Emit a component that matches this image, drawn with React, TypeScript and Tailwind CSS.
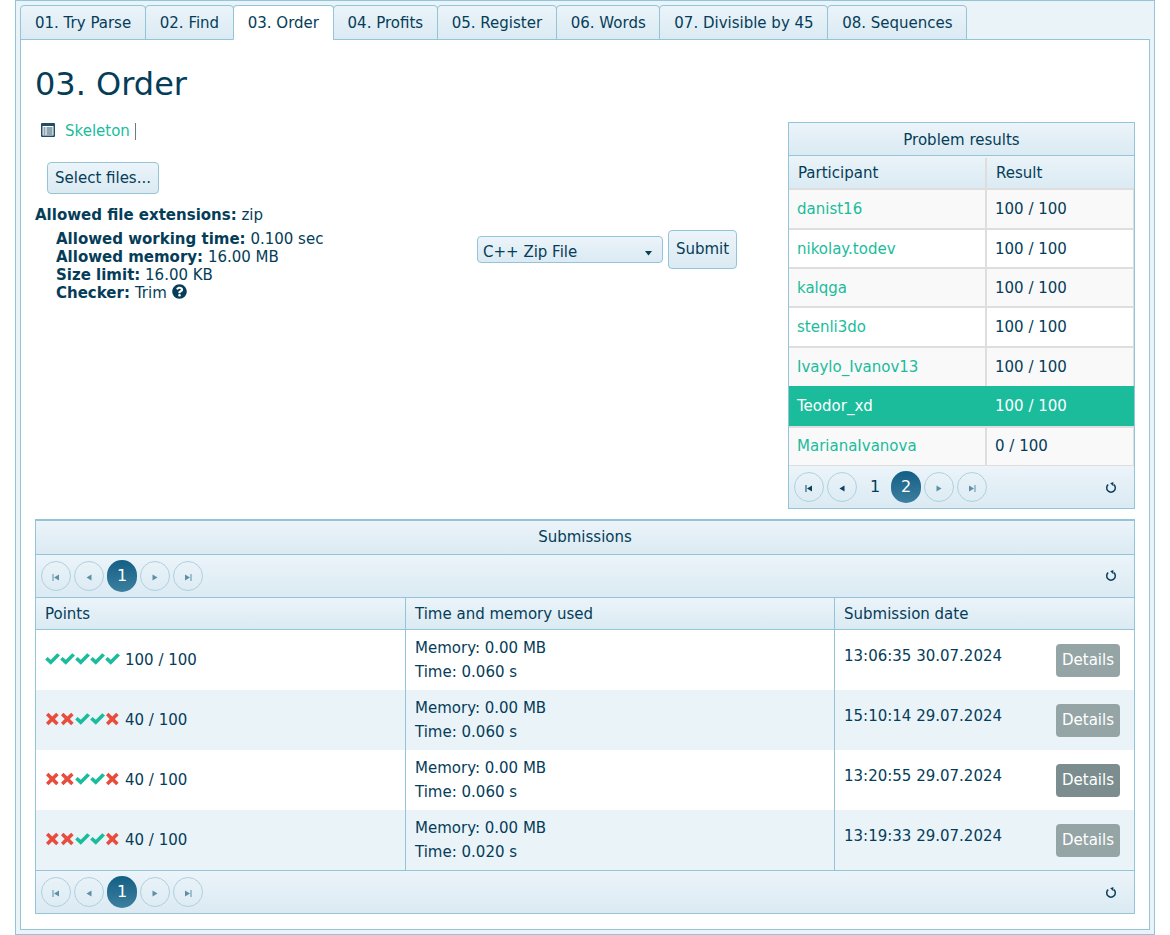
import React from "react";
import { FaQuestionCircle } from "react-icons/fa";

const tabs = ["01. Try Parse", "02. Find", "03. Order", "04. Profits", "05. Register", "06. Words", "07. Divisible by 45", "08. Sequences"];
const grad = "bg-gradient-to-b from-[#ebf4f9] to-[#dbeaf3]";

function Check() {
  return (
    <svg width="15" height="14" viewBox="0 0 15 14" className="shrink-0">
      <path d="M0.2 7.4 L2.6 5 L5.8 7.8 L12.2 1.2 L15 3.6 L5.8 12.8 Z" fill="#1abc9c" />
    </svg>
  );
}
function Cross() {
  return (
    <svg width="15" height="14" viewBox="0 0 15 14" className="shrink-0">
      <path d="M3.4 0.8 L7.3 4.4 L11.2 0.8 L13.6 3.2 L9.9 7 L13.6 10.8 L11.2 13.2 L7.3 9.6 L3.4 13.2 L1 10.8 L4.7 7 L1 3.2 Z" fill="#e74c3c" />
    </svg>
  );
}
function Marks({ v }: { v: string }) {
  return (
    <span className="flex -translate-y-px">
      {v.split("").map((c, i) => (c === "c" ? <Check key={i} /> : <Cross key={i} />))}
    </span>
  );
}
function PIcon({ k, dim }: { k: string; dim?: boolean }) {
  const c = dim ? "#5f8fa5" : "#0b3f5a";
  return (
    <svg width="10" height="10" viewBox="0 0 10 10" className="translate-y-px">
      {k === "first" && <><rect x="1.5" y="2" width="1" height="7" fill={c} /><path d="M8 2.5 V8.5 L3 5.5 Z" fill={c} /></>}
      {k === "prev" && <path d="M7.5 2.5 V8.5 L2.5 5.5 Z" fill={c} />}
      {k === "next" && <path d="M2.5 2.5 V8.5 L7.5 5.5 Z" fill={c} />}
      {k === "last" && <><rect x="7.5" y="2" width="1" height="7" fill={c} /><path d="M2 2.5 V8.5 L7 5.5 Z" fill={c} /></>}
    </svg>
  );
}
function Circle({ k, dim }: { k: string; dim?: boolean }) {
  return (
    <span className="flex h-[30px] w-[30px] items-center justify-center rounded-full border border-[#b0d0de]">
      <PIcon k={k} dim={dim} />
    </span>
  );
}
function Num({ n, active }: { n: number; active?: boolean }) {
  return active ? (
    <span className="flex h-[32px] w-[30px] items-center justify-center rounded-full bg-gradient-to-b from-[#125f85] to-[#3c7f9f] text-[16px] text-white">{n}</span>
  ) : (
    <span className="flex h-[32px] w-[31px] items-center justify-center pr-[1px] text-[16px]">{n}</span>
  );
}
function Refresh({ up }: { up?: boolean }) {
  return (
    <svg width="14" height="14" viewBox="0 0 14 14" fill="none" className={up ? "" : "translate-y-px"}>
      <path d="M4.2 3.6 A4.3 4.3 0 1 0 9.8 3.6" stroke="#0b3f5a" strokeWidth="1.5" />
      <path d="M9.4 1 L6.2 2.2 L9.4 5.2 Z" fill="#0b3f5a" />
    </svg>
  );
}
function Pager({ pages, className, up }: { pages: { n: number; active?: boolean }[]; className: string; up?: boolean }) {
  const dim = pages.length === 1;
  return (
    <div className={`flex items-center justify-between pl-[5px] pr-[16px] ${grad} ${className}`}>
      <div className="flex items-center gap-[3px]">
        <Circle k="first" dim={dim} />
        <Circle k="prev" dim={dim} />
        {pages.length === 1 ? (
          <Num n={1} active />
        ) : (
          <>
            <span className="-mr-[3px]"><Num n={1} /></span>
            <Num n={2} active />
          </>
        )}
        <Circle k="next" dim />
        <Circle k="last" dim />
      </div>
      <Refresh up={up} />
    </div>
  );
}

const results: [string, string, number][] = [
  ["danist16", "100 / 100", 40],
  ["nikolay.todev", "100 / 100", 39],
  ["kalqga", "100 / 100", 39],
  ["stenli3do", "100 / 100", 40],
  ["Ivaylo_Ivanov13", "100 / 100", 40],
  ["Teodor_xd", "100 / 100", 40],
  ["MarianaIvanova", "0 / 100", 39],
];
const subs = [
  ["ccccc", "100 / 100", "0.060", "13:06:35 30.07.2024"],
  ["xxccx", "40 / 100", "0.060", "15:10:14 29.07.2024"],
  ["xxccx", "40 / 100", "0.060", "13:20:55 29.07.2024"],
  ["xxccx", "40 / 100", "0.020", "13:19:33 29.07.2024"],
];

export default function App() {
  return (
    <div className="h-[935px] overflow-hidden bg-white pl-[15px] text-[15px] leading-[24px] text-[#053d59]" style={{ fontFamily: '"DejaVu Sans", sans-serif' }}>
      <div className="h-[935px] w-[1140px] border border-[#94c4d8] bg-[#e9f3f8] pl-[4px] pt-[4px]">
        <div className="relative z-10 flex h-[35px] pl-px">
          {tabs.map((t, i) => (
            <div
              key={t}
              className={`-ml-px flex h-[35px] items-center rounded-t-[4px] border border-[#94c4d8] pl-[14px] pr-[13.6px] ${i === 2 ? "border-b-white bg-white" : `${grad}`}`}
            >
              {t}
            </div>
          ))}
        </div>
        <div className="-mt-px h-[891px] w-[1130px] border border-[#94c4d8] bg-white px-[14px]">
          <h1 className="pt-[25px] text-[32px] leading-[38px]">03. Order</h1>
          <div className="mt-[19px] flex h-[387px] justify-between">
            <div className="w-[702px]">
              <div className="flex h-[16px] items-center pl-[6px]">
                <svg width="14" height="14" viewBox="0 0 14 14">
                  <rect width="14" height="14" rx="1" fill="#1f4e66" />
                  <rect x="1.5" y="3" width="11" height="9.5" fill="#fff" />
                  <path d="M2.5 4.5h2v1h-2zM5.5 4.5h6v1h-6zM2.5 6.5h2v1h-2zM5.5 6.5h6v1h-6zM2.5 8.5h2v1h-2zM5.5 8.5h6v1h-6zM2.5 10.5h2v1h-2zM5.5 10.5h6v1h-6z" fill="#1f4e66" />
                </svg>
                <span className="ml-[10px] translate-y-px text-[#1abc9c]">Skeleton</span>
                <span className="ml-[5px] h-[17px] w-px translate-y-px bg-[#777]" />
              </div>
              <div className="mt-[24px] ml-[12px] flex h-[32px] w-[112px] items-center justify-center rounded-[4px] border border-[#94c4d8] bg-gradient-to-b from-[#ebf4f9] to-[#dbeaf3]">
                Select files...
              </div>
              <div className="flex justify-between">
                <div>
                  <div className="mt-[9px] h-[24px]"><b>Allowed file extensions:</b> zip</div>
                  <div className="mt-[3px] pl-[21px] leading-[18px]">
                    <div><b>Allowed working time:</b> 0.100 sec</div>
                    <div><b>Allowed memory:</b> 16.00 MB</div>
                    <div><b>Size limit:</b> 16.00 KB</div>
                    <div className="flex items-center"><b>Checker:</b><span className="ml-[5px]">Trim</span><FaQuestionCircle className="ml-[5px] -translate-y-[2px] text-[#053d59]" size={15} /></div>
                  </div>
                </div>
                <div className="mt-[36px] flex items-start">
                  <div className="mt-[6px] flex h-[27px] w-[186px] items-center justify-between rounded-[4px] border border-[#94c4d8] bg-gradient-to-b from-[#ebf4f9] to-[#dbeaf3] pl-[5px] pr-[10px] pt-[4px]">
                    <span>C++ Zip File</span>
                    <svg width="7" height="6" viewBox="0 0 7 6" className="translate-y-px"><path d="M0 1 H7 L3.5 5.5 Z" fill="#0b3f5a" /></svg>
                  </div>
                  <div className="ml-[5px] flex h-[39px] w-[69px] items-center justify-center rounded-[4px] border border-[#94c4d8] bg-gradient-to-b from-[#ebf4f9] to-[#dbeaf3] pb-[2px]">Submit</div>
                </div>
              </div>
            </div>
            <div className="w-[347px] border border-[#94c4d8]">
              <div className={`flex h-[33px] items-center justify-center border-b border-[#94c4d8] pt-[2px] ${grad}`}>Problem results</div>
              <div className={`flex h-[32px] items-center pt-[2px] ${grad}`}>
                <div className="flex h-full w-[198px] items-center border-r-2 border-[#dedede] pl-[9px]">Participant</div>
                <div className="pl-[9px]">Result</div>
              </div>
              {results.map(([n, r, h], i) => {
                const sel = n === "Teodor_xd";
                const pad = i === 4 ? "" : i > 4 ? "pb-[2px]" : "";
                return (
                  <div
                    key={n}
                    style={{ height: h }}
                    className={`flex items-center border-t-2 border-r ${sel ? "border-[#1abc9c] bg-[#1abc9c] text-white" : `border-[#dedede] ${i % 2 === 0 ? "bg-[#f9f9f9]" : "bg-white"}`}`}
                  >
                    <div className={`flex h-full w-[198px] items-center pl-[8px] ${pad} ${sel ? "" : "border-r-2 border-[#dedede] text-[#1abc9c]"}`}>{n}</div>
                    <div className={`pl-[8px] ${pad}`}>{r}</div>
                  </div>
                );
              })}
              <Pager pages={[{ n: 1 }, { n: 2, active: true }]} className="h-[43px] border-t border-[#dedede]" />
            </div>
          </div>
          <div className="mt-[10px] w-[1100px] border border-t-2 border-[#94c4d8]">
            <div className={`flex h-[34px] items-center justify-center border-b border-[#94c4d8] pb-[2px] ${grad}`}>Submissions</div>
            <Pager up pages={[{ n: 1, active: true }]} className="h-[43px] border-b border-[#94c4d8]" />
            <div className={`flex h-[32px] items-center border-b border-[#94c4d8] ${grad}`}>
              <div className="flex h-full w-[370px] items-center border-r border-[#94c4d8] pl-[9px]">Points</div>
              <div className="flex h-full w-[429px] items-center border-r border-[#94c4d8] pl-[9px]">Time and memory used</div>
              <div className="pl-[9px]">Submission date</div>
            </div>
            {subs.map(([m, p, t, d], i) => (
              <div key={d} className={`flex h-[60px] ${i % 2 === 1 ? "bg-[#eaf3f8]" : "bg-white"}`}>
                <div className="flex w-[370px] items-center gap-[4px] border-r border-[#94c4d8] pl-[9px]">
                  <Marks v={m} />
                  <span className="ml-px">{p}</span>
                </div>
                <div className="flex w-[429px] flex-col justify-center border-r border-[#94c4d8] pl-[9px]">
                  <div>Memory: 0.00 MB</div>
                  <div>Time: {t} s</div>
                </div>
                <div className="flex flex-1 items-start justify-between pl-[9px] pr-[14px] pt-[14px]">
                  <span>{d}</span>
                  <span className={`flex h-[33px] w-[64px] items-center justify-center rounded-[4px] pb-[2px] text-white ${i === 2 ? "bg-[#7b8d8e]" : "bg-[#95a5a6]"}`}>Details</span>
                </div>
              </div>
            ))}
            <Pager pages={[{ n: 1, active: true }]} className="h-[43px] border-t border-[#94c4d8]" />
          </div>
        </div>
      </div>
    </div>
  );
}
